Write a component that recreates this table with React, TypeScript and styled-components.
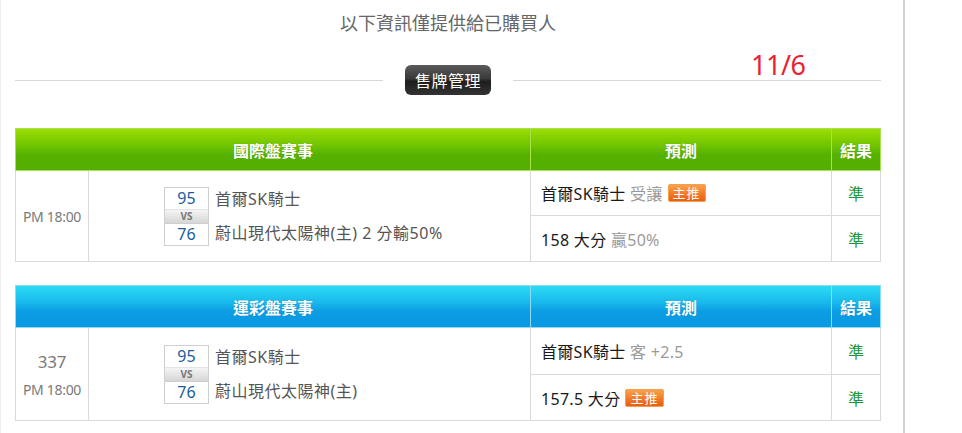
import React from "react";
import styled, { createGlobalStyle } from "styled-components";

const Global = createGlobalStyle`
  html, body { margin: 0; padding: 0; background: #fff; }
  body { font-family: "Noto Sans", "Noto Sans CJK TC", sans-serif; }
`;

const Page = styled.div`
  box-sizing: border-box;
  width: 905px;
  min-height: 433px;
  border-left: 1px solid #ececec;
  border-right: 2px solid #d2d2d2;
  padding: 10px 23px 0 14px;
`;

const Notice = styled.div`
  font-family: "Noto Sans CJK TC", sans-serif;
  font-size: 18px;
  line-height: 24px;
  color: #666;
  text-align: center;
  width: 866px;
`;

const Divider = styled.div`
  display: flex;
  align-items: center;
  gap: 22px;
  width: 866px;
  height: 30px;
  margin-top: 31px;
`;

const Segment = styled.div`
  position: relative;
  flex: 1;
  height: 1px;
  background: #d8d8d8;
`;

const DateMark = styled.span`
  position: absolute;
  left: 238px;
  top: -30px;
  font-family: "Noto Sans", sans-serif;
  font-size: 27px;
  line-height: 30px;
  color: #ea2230;
  letter-spacing: -0.5px;
`;

const TitleButton = styled.div`
  box-sizing: border-box;
  width: 86px;
  height: 30px;
  border-radius: 6px;
  background: linear-gradient(#5a5a5a 0%, #3a3a3a 45%, #1e1e1e 55%, #333 100%);
  color: #fff;
  font-family: "Noto Sans CJK TC", sans-serif;
  font-size: 16px;
  line-height: 30px;
  text-align: center;
  letter-spacing: 0.5px;
`;

type Tone = "green" | "blue";

const Table = styled.table<{ $tone: Tone }>`
  width: 865px;
  table-layout: fixed;
  border-collapse: collapse;
  margin-top: ${(p) => (p.$tone === "green" ? "33px" : "23px")};
  font-family: "Noto Sans", "Noto Sans CJK TC", sans-serif;
`;

const HeadRow = styled.tr<{ $tone: Tone }>`
  background: ${(p) =>
    p.$tone === "green"
      ? "linear-gradient(#9ddd00 0%, #6fc400 40%, #56b200 60%, #52ae00 100%)"
      : "linear-gradient(#2cdbf3 0%, #18b8ec 40%, #0b9de4 60%, #0a98e2 100%)"};
`;

const Th = styled.th<{ $tone: Tone }>`
  height: 41px;
  padding: 0;
  border: 1px solid ${(p) => (p.$tone === "green" ? "#a9e24e" : "#8ddcf4")};
  color: #fff;
  font-family: "Noto Sans CJK TC", sans-serif;
  font-size: 16px;
  font-weight: bold;
  text-shadow: 0 0 1px rgba(0, 0, 0, 0.25);
  text-align: center;
`;

const BodyRow = styled.tr<{ $h: number }>`
  height: ${(p) => p.$h}px;
`;

const Td = styled.td<{ $align?: string }>`
  padding: 0;
  border: 1px solid #dadada;
  text-align: ${(p) => p.$align || "left"};
  vertical-align: middle;
`;

const TimeCell = styled(Td)`
  color: #7a7a7a;
  font-size: 14px;
  letter-spacing: -0.3px;
`;

const GameNo = styled.div`
  font-size: 17px;
  line-height: 24px;
  margin-bottom: 6px;
`;

const MatchCell = styled(Td)`
  padding-left: 75px;
`;

const Match = styled.div`
  display: flex;
  align-items: center;
  gap: 6px;
`;

const ScoreBox = styled.div`
  box-sizing: border-box;
  width: 45px;
  border: 1px solid #cfcfcf;
  display: flex;
  flex-direction: column;
`;

const Score = styled.div`
  height: 21px;
  line-height: 21px;
  text-align: center;
  color: #1b5e9c;
  font-size: 16px;
`;

const Vs = styled.div`
  height: 13px;
  line-height: 13px;
  text-align: center;
  font-size: 10px;
  font-weight: bold;
  color: #777;
  background: linear-gradient(#f4f4f4, #d6d6d6);
  border-top: 1px solid #e4e4e4;
  border-bottom: 1px solid #cfcfcf;
`;

const Teams = styled.div`
  display: flex;
  flex-direction: column;
  gap: 13px;
  color: #555;
  font-size: 16px;
  line-height: 21px;
  letter-spacing: 0.5px;
`;

const PredCell = styled(Td)`
  padding-left: 10px;
  font-size: 16px;
  color: #1a1a1a;
  letter-spacing: 0.3px;
`;

const Sub = styled.span`
  color: #9a9a9a;
`;

const Badge = styled.span`
  display: inline-block;
  vertical-align: 2px;
  box-sizing: border-box;
  height: 18px;
  padding: 0 4px;
  margin-left: 5px;
  border-radius: 2px;
  border: 1px solid #f4a04c;
  background: linear-gradient(#f9a24d 0%, #f27d2a 50%, #e85e14 100%);
  color: #fff;
  font-family: "Noto Sans CJK TC", sans-serif;
  font-size: 13px;
  line-height: 16px;
  letter-spacing: 1px;
`;

const Result = styled(Td)`
  color: #23963a;
  font-family: "Noto Sans CJK TC", sans-serif;
  font-size: 16px;
`;

type Pred = { main: string; sub?: string; badge?: boolean };
type Game = {
  tone: Tone;
  title: string;
  no?: string;
  time: string;
  rows: [number, number];
  home: [string, string];
  away: [string, string];
  preds: [Pred, Pred];
};

const games: Game[] = [
  {
    tone: "green",
    title: "國際盤賽事",
    time: "PM 18:00",
    rows: [45, 46],
    home: ["95", "首爾SK騎士"],
    away: ["76", "蔚山現代太陽神(主) 2 分輸50%"],
    preds: [
      { main: "首爾SK騎士", sub: "受讓", badge: true },
      { main: "158 大分", sub: "贏50%" },
    ],
  },
  {
    tone: "blue",
    title: "運彩盤賽事",
    no: "337",
    time: "PM 18:00",
    rows: [47, 46],
    home: ["95", "首爾SK騎士"],
    away: ["76", "蔚山現代太陽神(主)"],
    preds: [
      { main: "首爾SK騎士", sub: "客 +2.5" },
      { main: "157.5 大分", badge: true },
    ],
  },
];

function GameTable({ g }: { g: Game }) {
  return (
    <Table $tone={g.tone}>
      <colgroup>
        <col style={{ width: 73 }} />
        <col style={{ width: 442 }} />
        <col style={{ width: 301 }} />
        <col style={{ width: 49 }} />
      </colgroup>
      <thead>
        <HeadRow $tone={g.tone}>
          <Th $tone={g.tone} colSpan={2}>{g.title}</Th>
          <Th $tone={g.tone}>預測</Th>
          <Th $tone={g.tone}>結果</Th>
        </HeadRow>
      </thead>
      <tbody>
        {g.preds.map((p, i) => (
          <BodyRow key={i} $h={g.rows[i]}>
            {i === 0 && (
              <>
                <TimeCell rowSpan={2} $align="center">
                  {g.no && <GameNo>{g.no}</GameNo>}
                  {g.time}
                </TimeCell>
                <MatchCell rowSpan={2}>
                  <Match>
                    <ScoreBox>
                      <Score>{g.home[0]}</Score>
                      <Vs>VS</Vs>
                      <Score>{g.away[0]}</Score>
                    </ScoreBox>
                    <Teams>
                      <span>{g.home[1]}</span>
                      <span>{g.away[1]}</span>
                    </Teams>
                  </Match>
                </MatchCell>
              </>
            )}
            <PredCell>
              {p.main}
              {p.sub && <Sub> {p.sub}</Sub>}
              {p.badge && <Badge>主推</Badge>}
            </PredCell>
            <Result $align="center">準</Result>
          </BodyRow>
        ))}
      </tbody>
    </Table>
  );
}

export default function App() {
  return (
    <>
      <Global />
      <Page>
        <Notice>以下資訊僅提供給已購買人</Notice>
        <Divider>
          <Segment />
          <TitleButton>售牌管理</TitleButton>
          <Segment>
            <DateMark>11/6</DateMark>
          </Segment>
        </Divider>
        {games.map((g) => (
          <GameTable key={g.title} g={g} />
        ))}
      </Page>
    </>
  );
}
